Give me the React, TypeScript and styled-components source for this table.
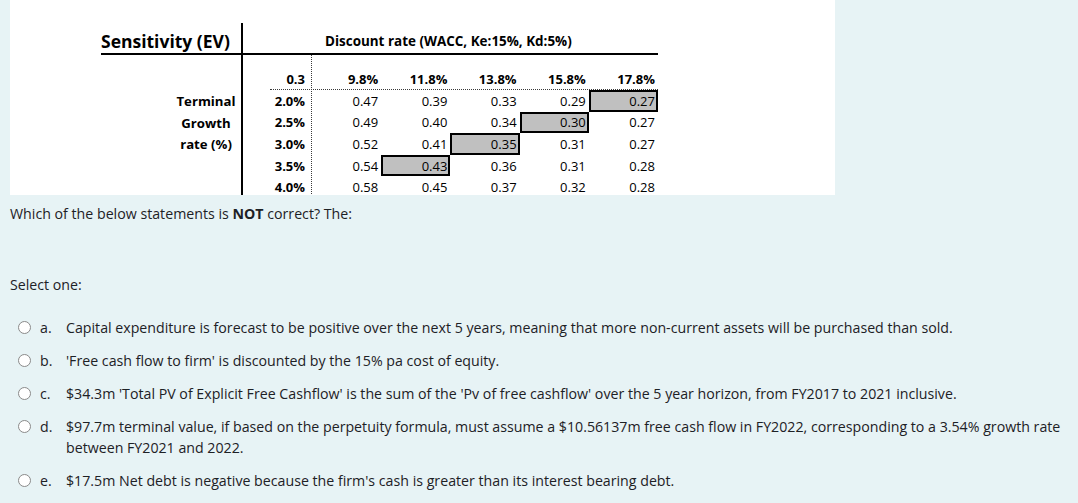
import React from "react";
import styled, { createGlobalStyle, css } from "styled-components";

const GlobalStyle = createGlobalStyle`
  html, body { margin: 0; padding: 0; background: #e7f3f5; }
  body { font-family: "Open Sans", "Noto Sans", sans-serif; color: #1d2125; }
`;

const Page = styled.div`
  min-height: 503px;
  padding: 0 2px 0 10px;
  box-sizing: border-box;
  font-size: 14.2px;
  line-height: 21px;
`;

/* ---------- Sensitivity table image ---------- */
const Figure = styled.div`
  width: 825px;
  height: 195px;
  overflow: hidden;
  background: #fff;
  display: grid;
  grid-template-columns: 91px 70px 70px 2px 27px 41px 1px repeat(5, 69.2px) 1fr;
  grid-template-rows: 23px 30px 2px 14px 20px 1px repeat(5, 21.6px);
  font-family: "Open Sans", sans-serif;
  color: #000;
`;

const Rule = styled.div<{ $col: string; $row: string; $kind: "solid" | "vdash" | "hdash" }>`
  grid-column: ${(p) => p.$col};
  grid-row: ${(p) => p.$row};
  ${(p) =>
    p.$kind === "solid"
      ? css`background: #000;`
      : p.$kind === "vdash"
      ? css`border-left: 1px dotted #3a3a3a;`
      : css`border-top: 1px dotted #3a3a3a;`}
`;

const Title = styled.div<{ $col: string; $size: number; $pad?: number }>`
  grid-column: ${(p) => p.$col};
  grid-row: 2;
  font-weight: 700;
  font-size: ${(p) => p.$size}px;
  line-height: 30px;
  padding-top: 3px;
  padding-left: ${(p) => p.$pad ?? 0}px;
  white-space: nowrap;
`;

const Cell = styled.div<{ $col: number; $row: number; $bold?: boolean; $hl?: boolean; $pr?: number }>`
  grid-column: ${(p) => p.$col};
  grid-row: ${(p) => p.$row};
  display: flex;
  align-items: center;
  justify-content: flex-end;
  padding-right: ${(p) => p.$pr ?? 3}px;
  padding-top: 1px;
  font-size: ${(p) => (p.$bold ? 13 : 13)}px;
  font-weight: ${(p) => (p.$bold ? 700 : 400)};
  white-space: nowrap;
  ${(p) =>
    p.$hl &&
    css`
      background: #c0c0c0;
      box-shadow: inset 0 0 0 2px #000;
    `}
`;

const SideLabel = styled.div<{ $row: number }>`
  grid-column: 3;
  grid-row: ${(p) => p.$row};
  display: flex;
  align-items: center;
  justify-content: center;
  padding-top: 2px;
  font-size: 13.2px;
  font-weight: 700;
  white-space: nowrap;
`;

/* ---------- Question ---------- */
const QText = styled.div`
  margin-top: 8px;
`;

const SelectOne = styled.div`
  margin-top: 50px;
`;

const Options = styled.div`
  margin-top: 22px;
  display: flex;
  flex-direction: column;
  gap: 12px;
`;

const Option = styled.label`
  display: flex;
  align-items: flex-start;
  padding-left: 8px;
`;

const Radio = styled.span`
  flex: none;
  width: 13px;
  height: 13px;
  margin-top: 4px;
  margin-right: 9px;
  box-sizing: border-box;
  border-radius: 50%;
  border: 1.5px solid #8a8a8a;
  background: #fff;
`;

const Letter = styled.span`
  flex: none;
  width: 26px;
`;

const OptText = styled.span`
  flex: 1;
`;

const headers = ["9.8%", "11.8%", "13.8%", "15.8%", "17.8%"];
const growth = ["2.0%", "2.5%", "3.0%", "3.5%", "4.0%"];
const values = [
  ["0.47", "0.39", "0.33", "0.29", "0.27"],
  ["0.49", "0.40", "0.34", "0.30", "0.27"],
  ["0.52", "0.41", "0.35", "0.31", "0.27"],
  ["0.54", "0.43", "0.36", "0.31", "0.28"],
  ["0.58", "0.45", "0.37", "0.32", "0.28"],
];
const highlighted: Record<number, number> = { 0: 4, 1: 3, 2: 2, 3: 1 };
const sideLabels = ["Terminal", "Growth", "rate (%)"];

const options: [string, string][] = [
  ["a.", "Capital expenditure is forecast to be positive over the next 5 years, meaning that more non-current assets will be purchased than sold."],
  ["b.", "'Free cash flow to firm' is discounted by the 15% pa cost of equity."],
  ["c.", "$34.3m 'Total PV of Explicit Free Cashflow' is the sum of the 'Pv of free cashflow' over the 5 year horizon, from FY2017 to 2021 inclusive."],
  ["d.", "$97.7m terminal value, if based on the perpetuity formula, must assume a $10.56137m free cash flow in FY2022, corresponding to a 3.54% growth rate between FY2021 and 2022."],
  ["e.", "$17.5m Net debt is negative because the firm's cash is greater than its interest bearing debt."],
];

export default function App() {
  return (
    <Page>
      <GlobalStyle />
      <Figure>
        <Title $col="2 / 4" $size={17.5}>Sensitivity (EV)</Title>
        <Title $col="8 / 13" $size={13.45} $pad={13}>Discount rate (WACC, Ke:15%, Kd:5%)</Title>
        <Rule $col="4" $row="2 / -1" $kind="solid" />
        <Rule $col="2 / 13" $row="3" $kind="solid" />
        <Rule $col="7" $row="4 / -1" $kind="vdash" />
        <Rule $col="6 / 13" $row="6" $kind="hdash" />
        <Cell $col={6} $row={5} $bold $pr={6}>0.3</Cell>
        {headers.map((h, i) => (
          <Cell key={h} $col={8 + i} $row={5} $bold>{h}</Cell>
        ))}
        {sideLabels.map((l, i) => (
          <SideLabel key={l} $row={7 + i}>{l}</SideLabel>
        ))}
        {growth.map((g, r) => (
          <React.Fragment key={g}>
            <Cell $col={6} $row={7 + r} $bold $pr={6}>{g}</Cell>
            {values[r].map((v, c) => (
              <Cell key={c} $col={8 + c} $row={7 + r} $hl={highlighted[r] === c}>{v}</Cell>
            ))}
          </React.Fragment>
        ))}
      </Figure>
      <QText>
        Which of the below statements is <b>NOT</b> correct? The:
      </QText>
      <SelectOne>Select one:</SelectOne>
      <Options>
        {options.map(([l, t]) => (
          <Option key={l}>
            <Radio />
            <Letter>{l}</Letter>
            <OptText>{t}</OptText>
          </Option>
        ))}
      </Options>
    </Page>
  );
}
